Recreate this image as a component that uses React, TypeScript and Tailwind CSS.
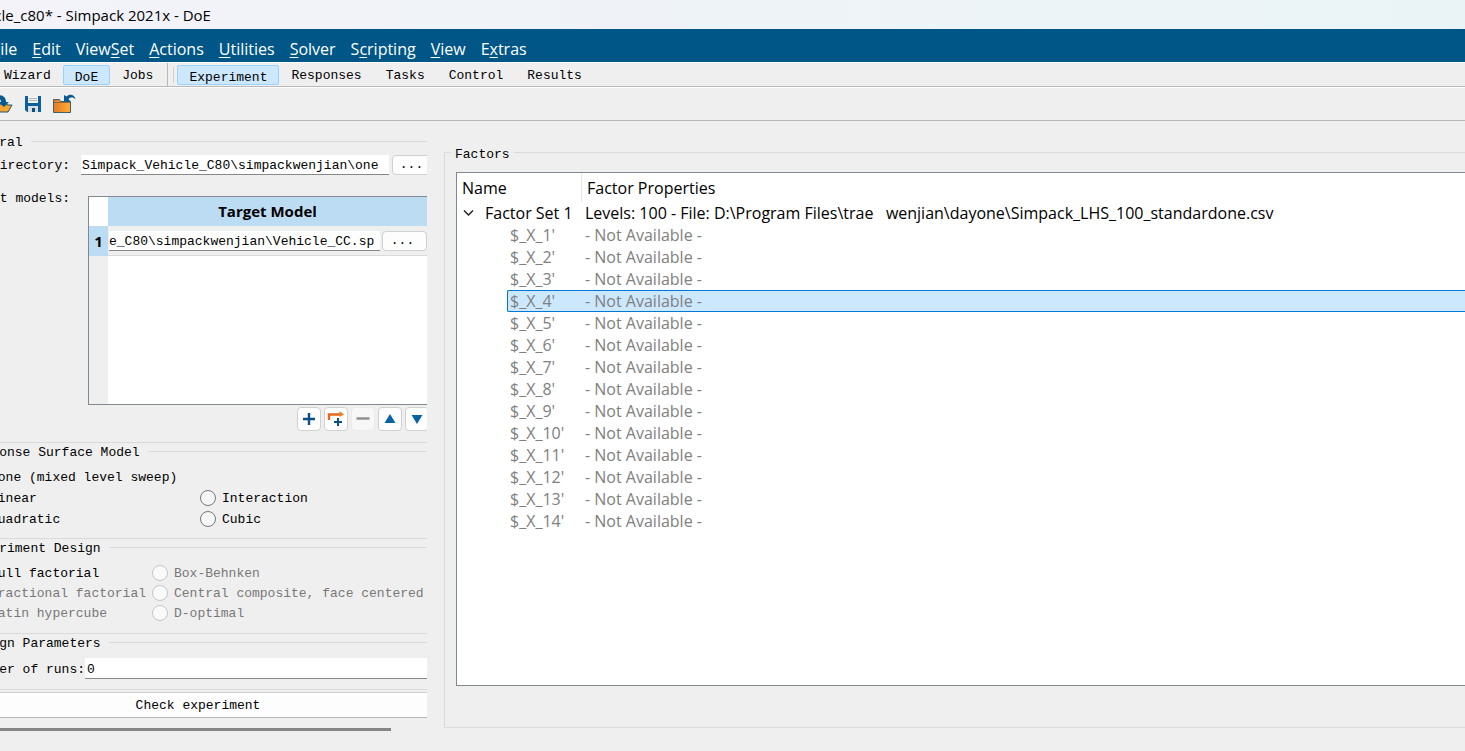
import { ReactNode } from "react";
import clsx from "clsx";

const menus = [
  { pre: "", key: "F", post: "ile" },
  { pre: "", key: "E", post: "dit" },
  { pre: "View", key: "S", post: "et" },
  { pre: "", key: "A", post: "ctions" },
  { pre: "", key: "U", post: "tilities" },
  { pre: "", key: "S", post: "olver" },
  { pre: "S", key: "c", post: "ripting" },
  { pre: "", key: "V", post: "iew" },
  { pre: "E", key: "x", post: "tras" },
];

const factors = Array.from({ length: 14 }, (_, i) => `$_X_${i + 1}'`);

function Tab({ label, active }: { label: string; active?: boolean }) {
  return (
    <button
      className={clsx(
        "h-5 rounded-xs border px-[11px] leading-4",
        active ? "border-[#99d1ff] bg-[#cce8ff] pt-1" : "border-transparent pt-0.5"
      )}
    >
      {label}
    </button>
  );
}

function Group({ title, className, children }: { title: string; className?: string; children: ReactNode }) {
  return (
    <section className={clsx("border-b border-[#dadada]", className)}>
      <div className="flex h-4 items-center gap-2">
        <h2 className="pt-1">{title}</h2>
        <div className="h-px flex-1 bg-[#dadada]" />
      </div>
      {children}
    </section>
  );
}

function Radio({ name, label, disabled, checked }: { name: string; label: string; disabled?: boolean; checked?: boolean }) {
  return (
    <label className={clsx("flex items-center gap-1.5 whitespace-nowrap", disabled && "text-[#787878]")}>
      <input
        type="radio"
        name={name}
        disabled={disabled}
        defaultChecked={checked}
        className="size-4 shrink-0 appearance-none rounded-full border border-[#777] bg-[#f6f6f6] disabled:border-[#c6c6c6] disabled:bg-[#fafafa]"
      />
      <span className="pt-0.5">{label}</span>
    </label>
  );
}

function ToolButton({ label, disabled, children }: { label: string; disabled?: boolean; children: ReactNode }) {
  return (
    <button
      aria-label={label}
      disabled={disabled}
      className="flex h-6 w-6 shrink-0 items-center justify-center rounded border border-[#d0d0d0] bg-[#fdfdfd] disabled:border-[#ebebeb] disabled:bg-[#f7f7f7]"
    >
      {children}
    </button>
  );
}

function OpenIcon() {
  return (
    <svg width="22" height="20" viewBox="0 0 22 20">
      <path d="M2 18V8h5l2 2h7v1h5l-4 7z" fill="#f7a531" stroke="#24566f" />
      <path d="M4 2c6-2 11 0 11 6h3l-5 5-6-5h3c0-3-2-4-6-4z" fill="#0a5a92" />
    </svg>
  );
}

function SaveIcon() {
  return (
    <svg width="16" height="16" viewBox="0 0 16 16">
      <path d="M0 0h16v16H2l-2-2z" fill="#0a5f9c" />
      <path d="M3 0h10v7H3z" fill="#f1f1f1" />
      <path d="M4 2.5h8M4 4.5h8" stroke="#b5b5b5" />
      <path d="M3 10h10v6H3z" fill="#d9dde0" />
      <path d="M7 12h3v4H7z" fill="#0a4a7d" />
    </svg>
  );
}

function RevertIcon() {
  return (
    <svg width="23" height="20" viewBox="0 0 23 20">
      <defs>
        <linearGradient id="folder">
          <stop offset="0" stopColor="#e8772a" />
          <stop offset="1" stopColor="#fbb034" />
        </linearGradient>
      </defs>
      <path d="M.5 18.5v-13h6l1 2h10v11z" fill="url(#folder)" stroke="#3f5f6b" />
      <path d="M1 8.500h16" stroke="#8a6a45" />
      <path d="M22.500 5.500C22 0 16 -.5 13.500 2.500L11 1v6.500h6.500L15.500 5c2-2 5-2 7 .5z" fill="#0a5a92" />
    </svg>
  );
}

export default function App() {
  return (
    <div className="flex min-h-screen flex-col overflow-hidden bg-[#efefef] font-['Liberation_Mono',monospace] text-[13px] leading-4 text-black">
      <header className="flex h-[29px] items-center bg-linear-to-r from-[#f3f3f9] to-[#eaf4f7] font-['Open_Sans',sans-serif] text-[15px]">
        <h1 className="-ml-9 whitespace-pre">Vehicle_c80* - Simpack 2021x - DoE</h1>
      </header>

      <nav className="flex h-[33px] items-center bg-[#005686] pt-1.5 font-['Open_Sans',sans-serif] text-base leading-5 text-white">
        <div className="-ml-2 flex gap-[15px]">
          {menus.map((m) => (
            <button key={m.pre + m.key + m.post}>
              {m.pre}
              <span className="underline underline-offset-2">{m.key}</span>
              {m.post}
            </button>
          ))}
        </div>
      </nav>

      <div className="flex h-[25px] items-center border-t border-b border-t-white border-b-[#b8b8b8]">
        <div className="-ml-2 flex h-full items-center border-r border-[#b8b8b8] pr-0.5">
          <Tab label="Wizard" />
          <Tab label="DoE" active />
          <Tab label="Jobs" />
        </div>
        <div className="mr-[3px] ml-[5px] h-4 w-px bg-[#d0d0d0]" />
        <div className="flex items-center">
          <Tab label="Experiment" active />
          <Tab label="Responses" />
          <Tab label="Tasks" />
          <Tab label="Control" />
          <Tab label="Results" />
        </div>
      </div>

      <div className="flex h-[34px] items-center border-t border-b border-t-white border-b-[#b8b8b8]">
        <div className="-ml-[9px] flex items-center gap-3">
          <button aria-label="Open"><OpenIcon /></button>
          <button aria-label="Save"><SaveIcon /></button>
          <button aria-label="Revert"><RevertIcon /></button>
        </div>
      </div>

      <main className="flex flex-1">
        <div className="w-[427px] shrink-0 overflow-hidden pt-3">
          <div className="-ml-8 w-[460px]">
            <Group title="General" className="pb-[11px]">
              <div className="mt-1.5 flex h-5 items-center">
                <label htmlFor="directory" className="w-[102px] shrink-0 pt-0.5 text-right">Directory:</label>
                <input
                  id="directory"
                  defaultValue="Simpack_Vehicle_C80\simpackwenjian\one"
                  className="ml-[11px] h-5 w-[308px] shrink-0 border-b border-[#888] bg-white px-px pt-0.5 outline-none"
                />
                <button className="ml-[3px] h-5 w-[39px] shrink-0 rounded border border-[#d0d0d0] bg-[#fdfdfd]">...</button>
              </div>
              <div className="mt-4 flex items-start">
                <span className="-ml-3 w-[114px] shrink-0 text-right whitespace-nowrap">Target models:</span>
                <div className="mt-[5px] ml-[18px] h-[209px] flex-1 border border-[#828790] bg-white">
                  <div className="flex h-full flex-col bg-linear-to-r from-[#efefef] from-[19px] to-white to-[19px]">
                    <table className="w-full table-fixed border-separate border-spacing-0">
                      <thead>
                        <tr className="h-[29px] font-['Open_Sans',sans-serif] text-[15px]">
                          <td className="w-[19px] bg-white p-0" />
                          <th className="bg-[#bcdcf4] p-0 pb-0.5 font-bold">Target Model</th>
                        </tr>
                      </thead>
                      <tbody>
                        <tr className="h-[30px]">
                          <th className="bg-[#bcdcf4] p-0 font-['Open_Sans',sans-serif] text-[15px] font-bold">1</th>
                          <td className="border-b border-[#dadada] bg-[#efefef] p-0">
                            <div className="flex items-center gap-0.5 pl-px">
                              <input
                                aria-label="Target model 1"
                                defaultValue="e_C80\simpackwenjian\Vehicle_CC.sp"
                                className="h-5 min-w-0 flex-1 border-b border-[#888] bg-white pt-0.5 outline-none"
                              />
                              <button className="h-5 w-[45px] rounded border border-[#d0d0d0] bg-[#fdfdfd] pr-1">...</button>
                            </div>
                          </td>
                        </tr>
                      </tbody>
                    </table>
                  </div>
                </div>
              </div>
              <div className="mt-0.5 ml-[329px] flex gap-[3px]">
                <ToolButton label="Add">
                  <svg width="14" height="14" viewBox="0 0 14 14"><path d="M7 1v12M1 7h12" stroke="#0a4f86" strokeWidth="2.400" /></svg>
                </ToolButton>
                <ToolButton label="Insert">
                  <svg width="18" height="18" viewBox="0 0 18 18" className="shrink-0">
                    <path d="M2 10V4.500h11" fill="none" stroke="#e4681c" strokeWidth="2.400" />
                    <path d="M12.500 1l4.500 3.500L12.500 7z" fill="#f08024" />
                    <path d="M11 8v8M7 12h8" stroke="#0a4f86" strokeWidth="2" />
                  </svg>
                </ToolButton>
                <ToolButton label="Remove" disabled>
                  <svg width="14" height="14" viewBox="0 0 14 14"><path d="M.5 6.500h13" stroke="#8c8c8c" strokeWidth="2.400" /></svg>
                </ToolButton>
                <ToolButton label="Move up">
                  <svg width="12" height="12" viewBox="0 0 12 12"><path d="M6 1l5.500 9H.5z" fill="#0763a5" /></svg>
                </ToolButton>
                <ToolButton label="Move down">
                  <svg width="12" height="12" viewBox="0 0 12 12"><path d="M6 11l5.500-9H.5z" fill="#0763a5" /></svg>
                </ToolButton>
              </div>
            </Group>

            <Group title="Response Surface Model" className="pb-[9px]">
              <div className="mt-[7px] grid auto-rows-[21px] grid-cols-[232px_1fr]">
                <div className="col-span-2 flex"><Radio name="rsm" label="None (mixed level sweep)" checked /></div>
                <Radio name="rsm" label="Linear" />
                <Radio name="rsm" label="Interaction" />
                <Radio name="rsm" label="Quadratic" />
                <Radio name="rsm" label="Cubic" />
              </div>
            </Group>

            <Group title="Experiment Design" className="pb-[10px]">
              <div className="mt-2 grid auto-rows-[20px] grid-cols-[184px_1fr]">
                <Radio name="design" label="Full factorial" checked />
                <Radio name="design" label="Box-Behnken" disabled />
                <Radio name="design" label="Fractional factorial" disabled />
                <Radio name="design" label="Central composite, face centered" disabled />
                <Radio name="design" label="Latin hypercube" disabled />
                <Radio name="design" label="D-optimal" disabled />
              </div>
            </Group>

            <Group title="Design Parameters" className="pb-[10px]">
              <div className="mt-2 flex h-[21px] items-center">
                <label htmlFor="runs" className="w-[117px] pt-0.5 text-right whitespace-nowrap">Number of runs:</label>
                <input
                  id="runs"
                  defaultValue="0"
                  className="h-[21px] min-w-0 flex-1 border-b border-[#888] bg-white px-0.5 pt-0.5 outline-none"
                />
              </div>
            </Group>

            <button className="mt-0.5 h-[26px] w-full border-t border-b border-t-[#d0d0d0] border-b-[#b8b8b8] bg-[#fdfdfd] pt-0.5">
              Check experiment
            </button>
          </div>
          <div className="mt-[10px] mr-9 h-[3px] bg-[#858585]" />
        </div>

        <fieldset className="mt-[23px] mb-[23px] ml-[17px] flex min-w-0 flex-1 flex-col border border-r-0 border-[#dadada] pt-3 pb-[41px] pl-[11px]">
          <legend className="-ml-[5px] h-4 px-1 pt-[3px]">Factors</legend>
          <div className="flex-1 border border-r-0 border-[#828790] bg-white font-['Open_Sans',sans-serif] text-base leading-5">
            <table className="w-full table-fixed border-separate border-spacing-0 text-left">
              <thead>
                <tr className="h-[29px]">
                  <th className="w-[125px] border-r border-[#e5e5e5] p-0 pl-[5px] font-normal">Name</th>
                  <th className="p-0 pl-[5px] font-normal">Factor Properties</th>
                </tr>
              </thead>
              <tbody>
                <tr className="h-[22px]">
                  <td className="p-0">
                    <div className="flex items-center gap-[11px] pl-1.5 whitespace-nowrap">
                      <svg width="11" height="8" viewBox="0 0 11 8" className="shrink-0">
                        <path d="M1 1.500l4.500 4.500L10 1.500" fill="none" stroke="#222" strokeWidth="1.500" />
                      </svg>
                      Factor Set 1
                    </div>
                  </td>
                  <td className="p-0 pl-[3px] whitespace-pre">
                    {"Levels: 100 - File: D:\\Program Files\\trae   wenjian\\dayone\\Simpack_LHS_100_standardone.csv"}
                  </td>
                </tr>
                {factors.map((name, i) => (
                  <tr key={name} className="h-[22px] text-[#808080]">
                    <td className="p-0 pl-[50px]">
                      <div
                        className={clsx(
                          "h-[22px] border border-r-0 pl-0.5",
                          i === 3 ? "rounded-l-xs border-[#0078d7] bg-[#cce8ff]" : "border-transparent"
                        )}
                      >
                        {name}
                      </div>
                    </td>
                    <td className="p-0">
                      <div
                        className={clsx(
                          "h-[22px] border-y pl-[3px]",
                          i === 3 ? "border-[#0078d7] bg-[#cce8ff]" : "border-transparent"
                        )}
                      >
                        - Not Available -
                      </div>
                    </td>
                  </tr>
                ))}
              </tbody>
            </table>
          </div>
        </fieldset>
      </main>
    </div>
  );
}
